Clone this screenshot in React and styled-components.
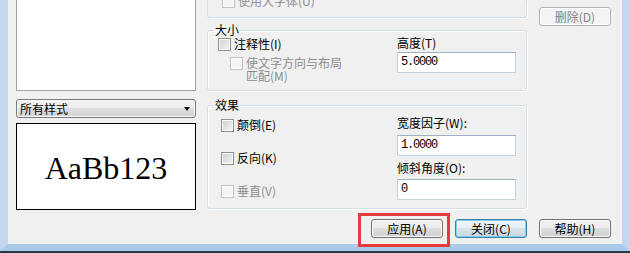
import React from "react";
import styled, { createGlobalStyle } from "styled-components";

const GlobalStyle = createGlobalStyle`
  html, body {
    margin: 0;
    padding: 0;
    overflow: hidden;
    background: #2b3947;
  }
  body {
    font-family: "Noto Sans CJK SC", "Liberation Sans", sans-serif;
    font-size: 12px;
    color: #000;
  }
`;

const Window = styled.div`
  width: 630px;
  height: 253px;
  box-sizing: border-box;
  border-bottom: 2px solid #2b3947;
`;

const Frame = styled.div`
  height: 251px;
  box-sizing: border-box;
  border-left: 8px solid #c3d7ee;
  border-right: 8px solid #c3d7ee;
  border-bottom: 7px solid #a9cbe9;
  background: #f0f0f0;
  padding: 0 11px 0 8px;
  display: flex;
  flex-direction: column;
`;

const Body = styled.div`
  display: grid;
  grid-template-columns: 180px 320px 73px;
  column-gap: 11px;
  height: 209px;
`;

const Column = styled.div`
  display: flex;
  flex-direction: column;
  align-items: ${(p) => (p.$end ? "flex-end" : "stretch")};
  min-width: 0;
`;

/* left column */
const ListBox = styled.div`
  height: 91px;
  box-sizing: border-box;
  background: #fff;
  border: 1px solid #a3a3a3;
  border-top: none;
`;

const Combo = styled.div`
  margin-top: 8px;
  height: 19px;
  box-sizing: border-box;
  border: 1px solid #7a7a7a;
  border-radius: 3px;
  background: linear-gradient(#f3f3f3 0%, #ececec 50%, #dedede 50%, #d2d2d2 100%);
  box-shadow: inset 0 0 0 1px #fafafa;
  display: flex;
  align-items: center;
  justify-content: space-between;
  padding: 0 5px 0 3px;
  line-height: 17px;
`;

const Arrow = styled.span`
  width: 0;
  height: 0;
  border-left: 3.5px solid transparent;
  border-right: 3.5px solid transparent;
  border-top: 4px solid #000;
  margin-top: 1px;
`;

const Preview = styled.div`
  margin-top: 5px;
  height: 87px;
  box-sizing: border-box;
  border: 1px solid #000;
  background: #fff;
  display: flex;
  align-items: center;
  justify-content: center;
  font-family: "Liberation Serif", serif;
  font-size: 32px;
  padding-top: 3px;
`;

/* middle column */
const GroupTail = styled.div`
  height: 18px;
  box-sizing: border-box;
  border: 1px solid #d5dfe5;
  border-top: none;
  border-radius: 0 0 3px 3px;
  box-shadow: 1px 1px 0 #fff;
  overflow: hidden;
  padding-left: 14px;
`;

const Group = styled.fieldset`
  margin: ${(p) => p.$top}px 0 0;
  padding: 0 10px 0 ${(p) => p.$left}px;
  height: ${(p) => p.$h}px;
  box-sizing: border-box;
  border: 1px solid #d5dfe5;
  border-radius: 3px;
  box-shadow: inset 1px 1px 0 #fff, 1px 1px 0 #fff;
  display: grid;
  grid-template-columns: 1fr 119px;
  min-width: 0;
`;

const Legend = styled.legend`
  margin-left: ${(p) => p.$shift}px;
  padding: 0 1px;
  line-height: 12px;
  height: 12px;
`;

const Checks = styled.div`
  display: flex;
  flex-direction: column;
  gap: ${(p) => p.$gap || 0}px;
  padding-top: ${(p) => p.$top || 0}px;
`;

const CheckRow = styled.div`
  display: flex;
  align-items: ${(p) => (p.$multi ? "flex-start" : "center")};
  gap: 3px;
  line-height: ${(p) => (p.$multi ? 13 : 16)}px;
  margin-left: ${(p) => p.$indent || 0}px;
  margin-top: ${(p) => p.$mt || 0}px;
  color: ${(p) => (p.$disabled ? "#8d8d8d" : "#000")};
  white-space: nowrap;
`;

const Lines = styled.span`
  display: flex;
  flex-direction: column;
`;

const Box = styled.span`
  flex: none;
  width: 13px;
  height: 13px;
  box-sizing: border-box;
  margin-top: ${(p) => p.$mt || 0}px;
  border: 1px solid ${(p) => (p.$disabled ? "#c2c2c2" : "#8e8f8f")};
  background: ${(p) =>
    p.$disabled
      ? "#f4f4f4"
      : "linear-gradient(135deg, #cfcfcf 0%, #e6e6e6 60%, #f4f4f4 100%)"};
  box-shadow: inset 0 0 0 1px #fbfbfb;
`;

const Fields = styled.div`
  display: flex;
  flex-direction: column;
`;

const Label = styled.div`
  line-height: 14px;
  height: 14px;
  margin-top: ${(p) => p.$mt || 0}px;
  white-space: nowrap;
`;

const Input = styled.div`
  margin-top: ${(p) => p.$mt || 0}px;
  height: 21px;
  box-sizing: border-box;
  border: 1px solid #c5d2e0;
  border-top-color: #9fb0c3;
  background: #fff;
  padding-left: 3px;
  font-family: "Liberation Mono", monospace;
  font-size: 12px;
  letter-spacing: -1.2px;
  line-height: 19px;
`;

/* buttons */
const Button = styled.div`
  width: 72px;
  height: 19px;
  box-sizing: border-box;
  border-radius: 3px;
  border: 1px solid #707070;
  background: linear-gradient(#f2f2f2 0%, #ebebeb 50%, #dddddd 50%, #cfcfcf 100%);
  box-shadow: inset 0 0 0 1px #fcfcfc;
  display: flex;
  align-items: center;
  justify-content: center;
  line-height: 17px;
  white-space: nowrap;

  ${(p) =>
    p.$disabled &&
    `
    border-color: #adb2b5;
    background: #f4f4f4;
    color: #838383;
  `}

  ${(p) =>
    p.$default &&
    `
    border-color: #3c7fb1;
    background: linear-gradient(#f0f7fb 0%, #e6eef3 50%, #d8e2e9 50%, #cbd7e0 100%);
    box-shadow: inset 0 0 0 1px #7fd0f2;
  `}
`;

const DeleteButton = styled(Button)`
  margin-top: 7px;
`;

const ButtonRow = styled.div`
  margin-top: 10px;
  display: flex;
  justify-content: flex-end;
  gap: 12px;
`;

const Highlight = styled.div`
  position: relative;

  &::after {
    content: "";
    position: absolute;
    top: -6px;
    left: -13px;
    right: -7px;
    bottom: -9px;
    border: 3px solid #e53b3e;
    pointer-events: none;
  }
`;

export default function App() {
  return (
    <>
      <GlobalStyle />
      <Window>
        <Frame>
          <Body>
            <Column>
              <ListBox />
              <Combo>
                <span>所有样式</span>
                <Arrow />
              </Combo>
              <Preview>AaBb123</Preview>
            </Column>

            <Column>
              <GroupTail>
                <CheckRow $disabled style={{ marginTop: -7 }}>
                  <Box $disabled />
                  <span>使用大字体(U)</span>
                </CheckRow>
              </GroupTail>

              <Group $top={6} $h={67} $left={10}>
                <Legend $shift={-4}>大小</Legend>
                <Checks>
                  <CheckRow>
                    <Box />
                    <span>注释性(I)</span>
                  </CheckRow>
                  <CheckRow $multi $disabled $indent={12} $mt={4}>
                    <Box $disabled $mt={1} />
                    <Lines>
                      <span>使文字方向与布局</span>
                      <span>匹配(M)</span>
                    </Lines>
                  </CheckRow>
                </Checks>
                <Fields>
                  <Label>高度(T)</Label>
                  <Input $mt={2}>5.0000</Input>
                </Fields>
              </Group>

              <Group $top={8} $h={110} $left={13}>
                <Legend $shift={-7}>效果</Legend>
                <Checks $top={6} $gap={17}>
                  <CheckRow>
                    <Box />
                    <span>颠倒(E)</span>
                  </CheckRow>
                  <CheckRow>
                    <Box />
                    <span>反向(K)</span>
                  </CheckRow>
                  <CheckRow $disabled>
                    <Box $disabled />
                    <span>垂直(V)</span>
                  </CheckRow>
                </Checks>
                <Fields>
                  <Label $mt={5}>宽度因子(W):</Label>
                  <Input $mt={5}>1.0000</Input>
                  <Label $mt={5}>倾斜角度(O):</Label>
                  <Input $mt={4}>0</Input>
                </Fields>
              </Group>
            </Column>

            <Column $end>
              <DeleteButton $disabled>删除(D)</DeleteButton>
            </Column>
          </Body>

          <ButtonRow>
            <Highlight>
              <Button>应用(A)</Button>
            </Highlight>
            <Button $default>关闭(C)</Button>
            <Button>帮助(H)</Button>
          </ButtonRow>
        </Frame>
      </Window>
    </>
  );
}
